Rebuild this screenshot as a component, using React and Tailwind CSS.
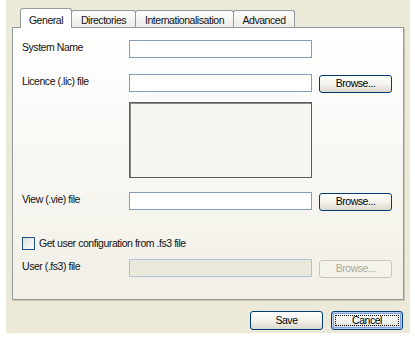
import React from "react";

const btn =
  "relative flex items-center justify-center rounded-[3px] border border-[#003c74] bg-linear-to-b from-white via-[#f4f3ee] to-[#dcd8cc] text-black";

function Tab({ label, width, active }) {
  if (active) {
    return (
      <div
        className={`relative z-10 -mb-px flex h-[20px] items-start justify-center rounded-t-[3px] border border-b-0 border-[#919b9c] bg-white pt-[4px] ${width}`}
      >
        {label}
      </div>
    );
  }
  return (
    <div
      className={`-ml-px flex h-[17px] items-start justify-center rounded-t-[3px] border border-b-0 border-[#919b9c] bg-linear-to-b from-white to-[#ecebe5] pt-[2px] ${width}`}
    >
      {label}
    </div>
  );
}

function FileRow({ label, disabled, browse, className = "" }) {
  return (
    <div className={`flex items-start ${className}`}>
      <div className="w-[107px] pt-[1px] leading-[13px]">{label}</div>
      <div
        className={`h-[18px] w-[183px] border ${
          disabled ? "border-[#b3c2d0] bg-[#ebe9dd]" : "border-[#7f9db9] bg-white"
        }`}
      />
      {browse &&
        (disabled ? (
          <div className="ml-[7px] mt-px flex h-[18px] w-[73px] items-center justify-center rounded-[3px] border border-[#c9c7ba] bg-[#f5f4ea] text-[#aca899]">
            Browse...
          </div>
        ) : (
          <div className={`ml-[7px] mt-px h-[18px] w-[73px] ${btn}`}>Browse...</div>
        ))}
    </div>
  );
}

export default function App() {
  return (
    <div className="h-[339px] w-[415px] bg-white font-['Liberation_Sans',sans-serif] text-[10.5px] tracking-[-0.45px] text-[#111]">
      <div className="ml-[6px] h-[333px] w-[404px] bg-[#ece9d8] px-[6px] pt-[8px]">
        <div className="flex items-end pl-[8px]">
          <Tab label="General" width="w-[52px]" active />
          <Tab label="Directories" width="w-[65px]" />
          <Tab label="Internationalisation" width="w-[99px]" />
          <Tab label="Advanced" width="w-[62px]" />
        </div>

        <div className="h-[273px] border border-[#919b9c] bg-linear-to-b from-white to-[#f1efe6] pl-[9px] pt-[12px] shadow-[1px_1px_0_#c9c6b6]">
          <FileRow label="System Name" />
          <FileRow label="Licence (.lic) file" browse className="mt-[16px]" />
          <div className="ml-[107px] mt-[9px] h-[76px] w-[183px] border border-[#5c5c5c] bg-[#f6f5f0] shadow-[inset_1px_1px_0_#8a8a8a]" />
          <FileRow label="View (.vie) file" browse className="mt-[14px]" />

          <div className="mt-[26px] flex h-[13px] items-center">
            <div className="h-[13px] w-[13px] border border-[#1c5180] bg-linear-to-br from-[#dcdcd6] to-white" />
            <span className="ml-[4px] leading-[13px]">Get user configuration from .fs3 file</span>
          </div>

          <FileRow label="User (.fs3) file" browse disabled className="mt-[9px]" />
        </div>

        <div className="mt-[11px] flex justify-end gap-[8px] pr-px">
          <div className={`h-[19px] w-[73px] ${btn}`}>Save</div>
          <div
            className={`h-[19px] w-[72px] ${btn} shadow-[inset_0_0_0_1px_#b5cdf5,inset_0_0_0_2px_#7ea0e6]`}
          >
            <span className="absolute inset-[3px] border border-dotted border-black" />
            <span className="relative">Cancel</span>
          </div>
        </div>
      </div>
    </div>
  );
}
